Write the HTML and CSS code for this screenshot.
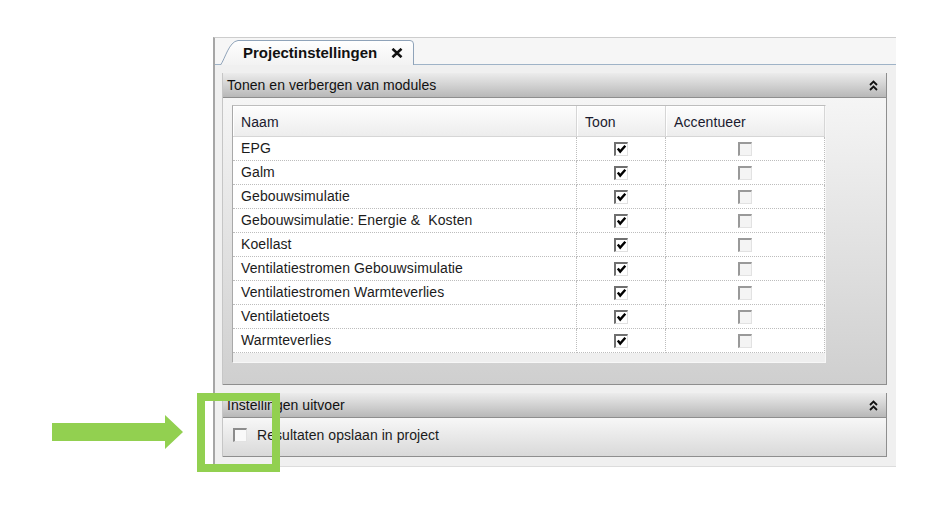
FILE: index.html
```html
<!DOCTYPE html>
<html lang="nl">
  <head>
    <meta charset="UTF-8" />
    <meta name="viewport" content="width=device-width, initial-scale=1.0" />
    <title>Projectinstellingen</title>
    <link rel="stylesheet" href="styles.css">
  </head>

  <body>
    <div class="page">
      <div class="doc">
        <!-- Tab strip -->
        <div class="tabstrip">
          <div class="tab">
            <svg class="tab-shape" width="195" height="25" viewBox="0 0 195 25">
              <defs>
                <linearGradient id="tabfill" x1="0" y1="0" x2="0" y2="1">
                  <stop offset="0" stop-color="#ffffff" />
                  <stop offset="1" stop-color="#f2f2f2" />
                </linearGradient>
              </defs>
              <path d="M0.5 25 C5 19 9 1.5 18 0.5 L190 0.5 Q193.5 0.5 193.5 4 L193.5 25" fill="url(#tabfill)" stroke="#8fa3b9" />
            </svg>
            <span class="tab-title">Projectinstellingen</span>
            <svg class="tab-close" width="12" height="10" viewBox="0 0 12 10">
              <path d="M1.5 0.8 L10.5 9.2 M10.5 0.8 L1.5 9.2" stroke="#111" stroke-width="2.6" />
            </svg>
          </div>
        </div>

        <div class="doc-body">
          <!-- Modules -->
          <section class="group">
            <div class="group-head">
              <span>Tonen en verbergen van modules</span>
              <svg class="collapse" width="9" height="11" viewBox="0 0 9 11">
                <path d="M1 5 L4.5 1.5 L8 5 M1 10 L4.5 6.5 L8 10" fill="none" stroke="#111" stroke-width="1.8" />
              </svg>
            </div>
            <div class="group-body modules">
              <div class="grid">
                <div class="grid-row grid-head">
                  <div class="cell">Naam</div>
                  <div class="cell">Toon</div>
                  <div class="cell">Accentueer</div>
                </div>
                <div class="grid-body">
                  <div class="grid-row">
                    <div class="cell">EPG</div>
                    <div class="cell cell-check"><span class="box on"><svg width="11" height="11" viewBox="0 0 11 11"><path d="M1.8 4.6 L4.2 7.6 L9.3 1.8" fill="none" stroke="#000" stroke-width="2.4" /></svg></span></div>
                    <div class="cell cell-check"><span class="box off"></span></div>
                  </div>
                  <div class="grid-row">
                    <div class="cell">Galm</div>
                    <div class="cell cell-check"><span class="box on"><svg width="11" height="11" viewBox="0 0 11 11"><path d="M1.8 4.6 L4.2 7.6 L9.3 1.8" fill="none" stroke="#000" stroke-width="2.4" /></svg></span></div>
                    <div class="cell cell-check"><span class="box off"></span></div>
                  </div>
                  <div class="grid-row">
                    <div class="cell">Gebouwsimulatie</div>
                    <div class="cell cell-check"><span class="box on"><svg width="11" height="11" viewBox="0 0 11 11"><path d="M1.8 4.6 L4.2 7.6 L9.3 1.8" fill="none" stroke="#000" stroke-width="2.4" /></svg></span></div>
                    <div class="cell cell-check"><span class="box off"></span></div>
                  </div>
                  <div class="grid-row">
                    <div class="cell">Gebouwsimulatie: Energie &amp;&nbsp; Kosten</div>
                    <div class="cell cell-check"><span class="box on"><svg width="11" height="11" viewBox="0 0 11 11"><path d="M1.8 4.6 L4.2 7.6 L9.3 1.8" fill="none" stroke="#000" stroke-width="2.4" /></svg></span></div>
                    <div class="cell cell-check"><span class="box off"></span></div>
                  </div>
                  <div class="grid-row">
                    <div class="cell">Koellast</div>
                    <div class="cell cell-check"><span class="box on"><svg width="11" height="11" viewBox="0 0 11 11"><path d="M1.8 4.6 L4.2 7.6 L9.3 1.8" fill="none" stroke="#000" stroke-width="2.4" /></svg></span></div>
                    <div class="cell cell-check"><span class="box off"></span></div>
                  </div>
                  <div class="grid-row">
                    <div class="cell">Ventilatiestromen Gebouwsimulatie</div>
                    <div class="cell cell-check"><span class="box on"><svg width="11" height="11" viewBox="0 0 11 11"><path d="M1.8 4.6 L4.2 7.6 L9.3 1.8" fill="none" stroke="#000" stroke-width="2.4" /></svg></span></div>
                    <div class="cell cell-check"><span class="box off"></span></div>
                  </div>
                  <div class="grid-row">
                    <div class="cell">Ventilatiestromen Warmteverlies</div>
                    <div class="cell cell-check"><span class="box on"><svg width="11" height="11" viewBox="0 0 11 11"><path d="M1.8 4.6 L4.2 7.6 L9.3 1.8" fill="none" stroke="#000" stroke-width="2.4" /></svg></span></div>
                    <div class="cell cell-check"><span class="box off"></span></div>
                  </div>
                  <div class="grid-row">
                    <div class="cell">Ventilatietoets</div>
                    <div class="cell cell-check"><span class="box on"><svg width="11" height="11" viewBox="0 0 11 11"><path d="M1.8 4.6 L4.2 7.6 L9.3 1.8" fill="none" stroke="#000" stroke-width="2.4" /></svg></span></div>
                    <div class="cell cell-check"><span class="box off"></span></div>
                  </div>
                  <div class="grid-row">
                    <div class="cell">Warmteverlies</div>
                    <div class="cell cell-check"><span class="box on"><svg width="11" height="11" viewBox="0 0 11 11"><path d="M1.8 4.6 L4.2 7.6 L9.3 1.8" fill="none" stroke="#000" stroke-width="2.4" /></svg></span></div>
                    <div class="cell cell-check"><span class="box off"></span></div>
                  </div>
                </div>
              </div>
            </div>
          </section>

          <!-- Output -->
          <section class="group">
            <div class="group-head">
              <span>Instellingen uitvoer</span>
              <svg class="collapse" width="9" height="11" viewBox="0 0 9 11">
                <path d="M1 5 L4.5 1.5 L8 5 M1 10 L4.5 6.5 L8 10" fill="none" stroke="#111" stroke-width="1.8" />
              </svg>
            </div>
            <div class="group-body output">
              <label class="option">
                <span class="box plain"></span>
                <span>Resultaten opslaan in project</span>
              </label>
            </div>
          </section>
        </div>
      </div>

      <!-- Annotation -->
      <svg class="callout-arrow" width="132" height="35" viewBox="0 0 132 35">
        <path d="M0 8 L113 8 L113 0 L131 17 L113 34 L113 26 L0 26 Z" fill="#92d050" />
      </svg>
      <div class="callout-box"></div>
    </div>
  </body>
</html>
```

FILE: styles.css
```css
body {
  margin: 0;
  background: #fff;
  font-family: "Liberation Sans", Arial, sans-serif;
  color: #1b1b1b;
}

* {
  box-sizing: border-box;
}

.page {
  position: relative;
  width: 946px;
  height: 525px;
  padding: 37px 0 0 213px;
}

/* --- Document window --- */

.doc {
  width: 683px;
  height: 430px;
  border-top: 1px solid #cdcdcd;
  border-left: 2px solid #a6a6a6;
  border-bottom: 1px solid #dcdcdc;
  background: #f0f0f0;
}

/* --- Tabs --- */

.tabstrip {
  display: flex;
  align-items: flex-end;
  height: 27px;
  padding-left: 5px;
  border-bottom: 1px solid #9fb3c7;
  background: #f6f6f6;
}

.tab {
  position: relative;
  display: flex;
  align-items: center;
  width: 195px;
  height: 25px;
  margin-bottom: -1px;
  padding-left: 23px;
}

.tab-shape {
  position: absolute;
  left: 0;
  top: 0;
}

.tab-title {
  position: relative;
  font-size: 15px;
  font-weight: bold;
  color: #111;
}

.tab-close {
  position: relative;
  margin-left: 14px;
}

.doc-body {
  padding: 8px 9px 0 7px;
}

/* --- Groups --- */

.group {
  border-left: 1px solid #c6c6c6;
  border-right: 1px solid #8e8e8e;
}

.group + .group {
  margin-top: 8px;
}

.group-head {
  display: flex;
  align-items: center;
  justify-content: space-between;
  height: 25px;
  padding: 0 8px 0 4px;
  border-bottom: 1px solid #8e8e8e;
  background: linear-gradient(#ececec, #b8b8b8);
  font-size: 14px;
  letter-spacing: 0.05px;
  color: #111;
}

.collapse {
  display: block;
}

.group-body {
  border-bottom: 1px solid #8e8e8e;
}

.modules {
  height: 287px;
  padding: 7px 0 0 9px;
  background: linear-gradient(#f5f5f5, #cfcfcf);
}

.output {
  height: 39px;
  padding: 9px 0 0 10px;
  background: linear-gradient(#f7f7f7, #d9d9d9);
}

.option {
  display: flex;
  align-items: center;
  gap: 10px;
  font-size: 14px;
  letter-spacing: 0.05px;
}

/* --- Grid --- */

.grid {
  width: 594px;
  padding-bottom: 9px;
  border: 1px solid;
  border-color: #bdbdbd #f7f7f7 #f7f7f7 #a9a9a9;
  background: #efefef;
}

.grid-row {
  display: grid;
  grid-template-columns: 344px 89px 159px;
}

.cell {
  font-size: 14px;
  letter-spacing: 0.1px;
  padding-left: 8px;
  white-space: nowrap;
}

.grid-head .cell {
  height: 31px;
  padding-top: 3px;
  line-height: 27px;
  border-right: 1px solid #d6d6d6;
  border-bottom: 1px solid #d6d6d6;
  background: linear-gradient(#fdfdfd, #ededed);
  box-shadow: inset 1px 1px #fff;
  color: #1a1a2e;
}

.grid-body .cell {
  height: 24px;
  line-height: 23px;
  border-right: 1px dotted #bdbdbd;
  border-bottom: 1px dotted #bdbdbd;
  background: #fff;
}

.grid-body .cell-check {
  display: flex;
  align-items: center;
  justify-content: center;
  padding-left: 0;
}

/* --- Checkboxes --- */

.box {
  display: block;
  flex: none;
  width: 14px;
  height: 14px;
  border-style: solid;
  border-width: 2px 1px 1px 2px;
  border-color: #6f6f6f #e0e0e0 #e0e0e0 #6f6f6f;
  background: #fff;
}

.box svg {
  display: block;
}

.box.off {
  border-color: #999 #e2e2e2 #e2e2e2 #999;
  background: #f4f4f4;
}

.box.plain {
  border-color: #8c8c8c #e2e2e2 #e2e2e2 #8c8c8c;
  background: #f9f9f9;
}

/* --- Annotation --- */

.callout-arrow {
  position: absolute;
  left: 52px;
  top: 415px;
}

.callout-box {
  position: absolute;
  left: 197px;
  top: 393px;
  width: 83px;
  height: 79px;
  border: 8px solid #92d050;
}
```
